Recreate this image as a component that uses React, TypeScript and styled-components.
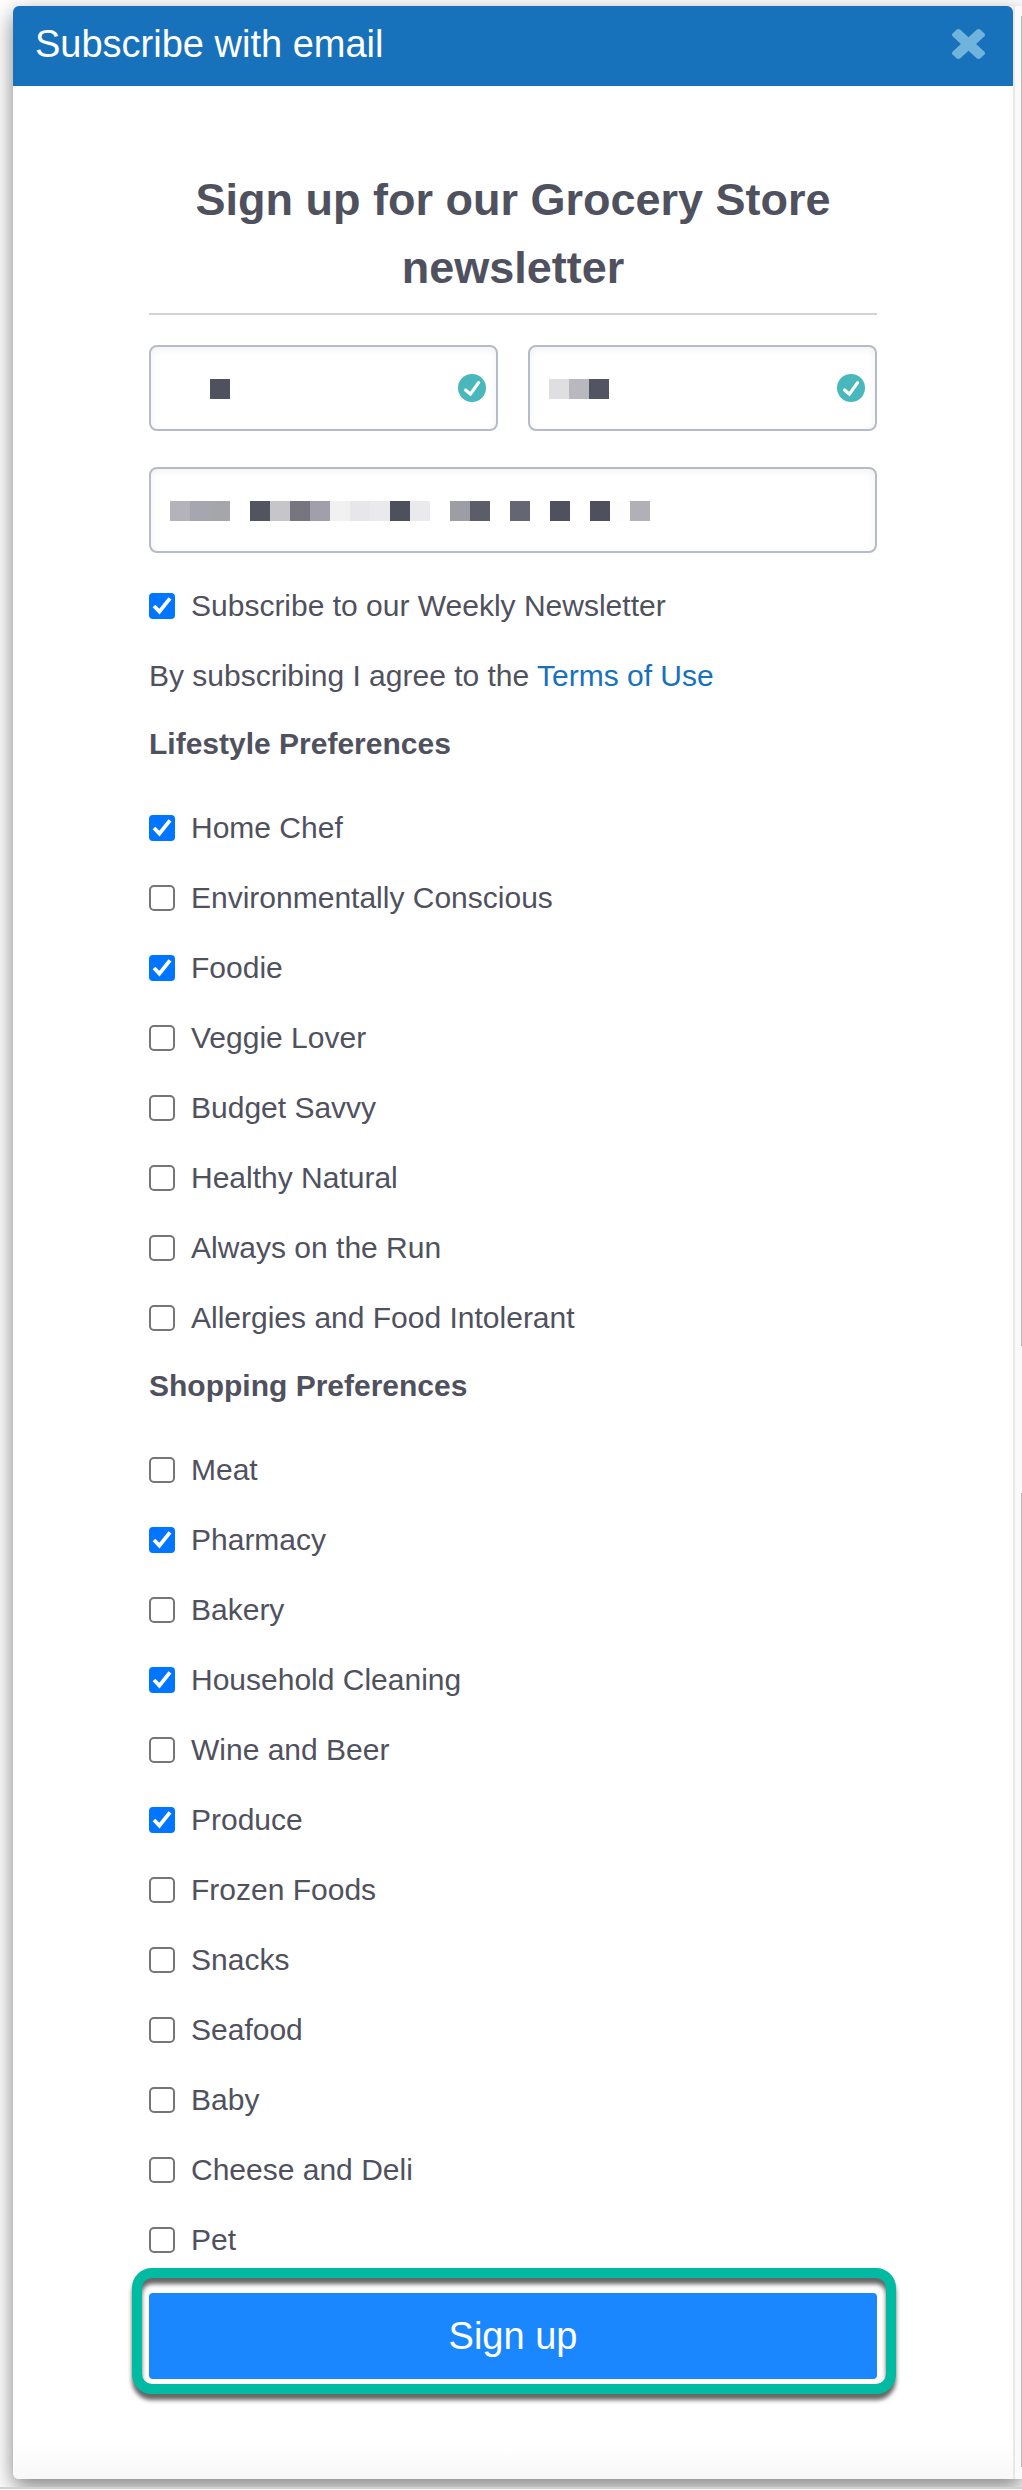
import React, { useId, useState } from "react";
import styled, { createGlobalStyle } from "styled-components";

const ink = "#50515e";
const brand = "#1771bb";

const GlobalStyle = createGlobalStyle`
  *, *::before, *::after { box-sizing: border-box; }
  body {
    margin: 0;
    background: #fff;
    color: ${ink};
    font-family: "Liberation Sans", Arial, Helvetica, sans-serif;
    font-size: 30px;
  }
`;

const Page = styled.div`
  padding: 6px 0 8px 13px;
  border-bottom: 2px solid #d0d0d0;
  overflow: hidden;
`;

const Modal = styled.div`
  display: flex;
  border-radius: 6px 0 0 6px;
  background: #fafafa;
  box-shadow: 0 8px 22px rgba(0, 0, 0, 0.5);
`;

const Panel = styled.section`
  flex: 1;
  min-width: 0;
  border-radius: 6px;
  background: linear-gradient(to top, #f8f8f8, #fff 36px);
`;

const Track = styled.div`
  flex: none;
  display: flex;
  flex-direction: column;
  align-items: flex-end;
  gap: 147px;
  width: 9px;
  padding: 10px 0 12px;
  border-left: 2px solid #e8e8e8;
`;

const TrackEdge = styled.span<{ $share: number }>`
  flex: ${(p) => p.$share} 0 0;
  width: 1px;
  background: #b9b9b9;
`;

const Header = styled.header`
  display: flex;
  align-items: center;
  justify-content: space-between;
  height: 80px;
  padding: 0 28px 4px 22px;
  border-radius: 6px 6px 0 0;
  background: ${brand};
  color: #fff;
`;

const Title = styled.h1`
  margin: 0;
  font-size: 38px;
  font-weight: 400;
  line-height: 76px;
`;

const CloseButton = styled.button`
  display: flex;
  padding: 0;
  border: 0;
  background: none;
  color: #70b4de;
  cursor: pointer;
`;

const Form = styled.form`
  padding: 80px 136px 100px;
`;

const Heading = styled.h2`
  margin: 0 0 30px;
  padding-bottom: 11px;
  border-bottom: 2px solid #d2d2d2;
  font-size: 45px;
  line-height: 68px;
  text-align: center;
`;

const Fields = styled.div`
  display: grid;
  grid-template-columns: 1fr 1fr;
  gap: 36px 30px;
  margin-bottom: 18px;
`;

const Field = styled.div<{ $wide?: boolean }>`
  position: relative;
  grid-column: ${(p) => (p.$wide ? "1 / -1" : "auto")};
`;

const TextBox = styled.input`
  display: block;
  width: 100%;
  height: 86px;
  padding: 0 52px 0 20px;
  border: 2px solid #b5bbc7;
  border-radius: 8px;
  background: #fff;
  box-shadow: inset 0 2px 8px rgba(0, 0, 0, 0.06);
  color: ${ink};
  font: inherit;
`;

const Mosaic = styled.div`
  position: absolute;
  top: 34px;
  left: 21px;
  display: flex;
  pointer-events: none;
`;

const Tile = styled.span<{ $tone: string }>`
  width: 20px;
  height: 20px;
  background: ${(p) => p.$tone};
`;

const ValidMark = styled.svg`
  position: absolute;
  top: 29px;
  right: 12px;
  width: 28px;
  height: 28px;
`;

const Row = styled.label`
  display: flex;
  align-items: center;
  gap: 16px;
  height: 70px;
`;

const tick = encodeURIComponent(
  '<svg xmlns="http://www.w3.org/2000/svg" viewBox="0 0 26 26"><path d="M5 13l5.4 5.6L21 5.4" fill="none" stroke="#fff" stroke-width="3.8"/></svg>'
);

const Box = styled.input`
  flex: none;
  appearance: none;
  width: 26px;
  height: 26px;
  margin: 0;
  border: 2px solid #767676;
  border-radius: 5px;
  background: #fff;

  &:checked {
    border: 0;
    border-radius: 4px;
    background: #0075ff url("data:image/svg+xml,${tick}") center / 26px 26px no-repeat;
  }
`;

const Terms = styled.p`
  margin: 0;
  line-height: 70px;
`;

const Link = styled.a`
  color: ${brand};
  text-decoration: none;
`;

const Group = styled.fieldset`
  min-width: 0;
  margin: 0;
  padding: 0;
  border: 0;
`;

const Legend = styled.legend`
  margin-bottom: 16px;
  padding: 0;
  font-weight: 700;
  line-height: 66px;
`;

const Action = styled.div`
  position: relative;
  margin-top: 18px;
`;

const Highlight = styled.span`
  position: absolute;
  inset: -25px -19px -15px -17px;
  border: 10px solid #00bba2;
  border-radius: 20px;
  filter: drop-shadow(0 6px 2px rgba(0, 0, 0, 0.6));
  pointer-events: none;
`;

const Submit = styled.button`
  display: block;
  width: 100%;
  height: 86px;
  padding: 0;
  border: 0;
  border-radius: 4px;
  background: #1b87ff;
  color: #fff;
  font: inherit;
  font-size: 38px;
  cursor: pointer;
`;

const none = "transparent";
const firstTiles = [none, none, "#50515e"];
const lastTiles = ["#dfdfe1", "#b8b8be", "#525461"];
const emailTiles = [
  "#b4b3b9", "#a6a6b0", "#a5a6aa", none, "#525560", "#c6c5ca", "#777680",
  "#a1a0aa", "#f1f1f1", "#e7e7e9", "#eaeaec", "#4f505d", "#eaeaec", none,
  "#9d9da6", "#5b5d69", none, "#656673", none, "#4f515e", none, "#4f505d",
  "#fdfdfd", "#b0b0b6",
];

const lifestyle: [string, boolean][] = [
  ["Home Chef", true],
  ["Environmentally Conscious", false],
  ["Foodie", true],
  ["Veggie Lover", false],
  ["Budget Savvy", false],
  ["Healthy Natural", false],
  ["Always on the Run", false],
  ["Allergies and Food Intolerant", false],
];

const shopping: [string, boolean][] = [
  ["Meat", false],
  ["Pharmacy", true],
  ["Bakery", false],
  ["Household Cleaning", true],
  ["Wine and Beer", false],
  ["Produce", true],
  ["Frozen Foods", false],
  ["Snacks", false],
  ["Seafood", false],
  ["Baby", false],
  ["Cheese and Deli", false],
  ["Pet", false],
];

function CheckRow({ label, initial }: { label: string; initial: boolean }) {
  const id = useId();
  const [on, setOn] = useState(initial);
  return (
    <Row htmlFor={id}>
      <Box id={id} type="checkbox" checked={on} onChange={(e) => setOn(e.target.checked)} />
      {label}
    </Row>
  );
}

interface MaskedProps {
  label: string;
  type?: string;
  tiles: string[];
  valid?: boolean;
  wide?: boolean;
}

function MaskedField({ label, type = "text", tiles, valid, wide }: MaskedProps) {
  return (
    <Field $wide={wide}>
      <TextBox type={type} aria-label={label} />
      <Mosaic aria-hidden="true">
        {tiles.map((tone, i) => (
          <Tile key={i} $tone={tone} />
        ))}
      </Mosaic>
      {valid && (
        <ValidMark viewBox="0 0 28 28" aria-hidden="true">
          <circle cx="14" cy="14" r="14" fill="#49b8bc" />
          <path
            d="M7.6 16l4.8 4.2L20.6 8.6"
            fill="none"
            stroke="#fff"
            strokeWidth="3.2"
            strokeLinecap="round"
          />
        </ValidMark>
      )}
    </Field>
  );
}

function Preferences({ title, options }: { title: string; options: [string, boolean][] }) {
  return (
    <Group>
      <Legend>{title}</Legend>
      {options.map(([label, initial]) => (
        <CheckRow key={label} label={label} initial={initial} />
      ))}
    </Group>
  );
}

export default function App() {
  return (
    <>
      <GlobalStyle />
      <Page>
        <Modal role="dialog" aria-labelledby="dialog-title">
          <Panel>
            <Header>
              <Title id="dialog-title">Subscribe with email</Title>
              <CloseButton type="button" aria-label="Close">
                <svg
                  width="33"
                  height="30"
                  viewBox="110 366 1188 1188"
                  preserveAspectRatio="none"
                  fill="currentColor"
                  aria-hidden="true"
                >
                  <path d="M1298 1322q0 40-28 68l-136 136q-28 28-68 28t-68-28l-294-294-294 294q-28 28-68 28t-68-28l-136-136q-28-28-28-68t28-68l294-294-294-294q-28-28-28-68t28-68l136-136q28-28 68-28t68 28l294 294 294-294q28-28 68-28t68 28l136 136q28 28 28 68t-28 68l-294 294 294 294q28 28 28 68z" />
                </svg>
              </CloseButton>
            </Header>
            <Form onSubmit={(e) => e.preventDefault()}>
              <Heading>Sign up for our Grocery Store newsletter</Heading>
              <Fields>
                <MaskedField label="First name" tiles={firstTiles} valid />
                <MaskedField label="Last name" tiles={lastTiles} valid />
                <MaskedField label="Email" type="email" tiles={emailTiles} wide />
              </Fields>
              <CheckRow label="Subscribe to our Weekly Newsletter" initial />
              <Terms>
                By subscribing I agree to the <Link href="#terms">Terms of Use</Link>
              </Terms>
              <Preferences title="Lifestyle Preferences" options={lifestyle} />
              <Preferences title="Shopping Preferences" options={shopping} />
              <Action>
                <Submit type="submit">Sign up</Submit>
                <Highlight />
              </Action>
            </Form>
          </Panel>
          <Track aria-hidden="true">
            <TrackEdge $share={1330} />
            <TrackEdge $share={974} />
          </Track>
        </Modal>
      </Page>
    </>
  );
}
